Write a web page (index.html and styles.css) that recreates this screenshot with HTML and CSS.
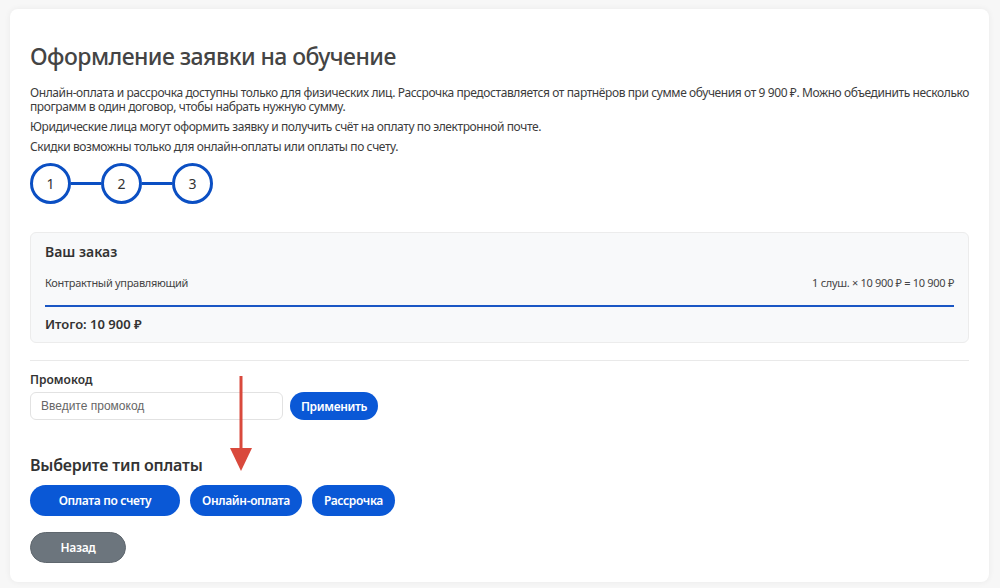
FILE: index.html
```html
<!DOCTYPE html>
<html lang="ru">
<head>
<meta charset="utf-8">
<title>Оформление заявки на обучение</title>
<link rel="stylesheet" href="styles.css">
</head>
<body>
<div class="page">
  <main class="card">
    <h1 class="title">Оформление заявки на обучение</h1>
    <p class="text">Онлайн-оплата и рассрочка доступны только для физических лиц. Рассрочка предоставляется от партнёров при сумме обучения от 9 900 ₽. Можно объединить несколько программ в один договор, чтобы набрать нужную сумму.</p>
    <p class="text">Юридические лица могут оформить заявку и получить счёт на оплату по электронной почте.</p>
    <p class="text">Скидки возможны только для онлайн-оплаты или оплаты по счету.</p>

    <div class="steps">
      <span class="step">1</span>
      <span class="step-line"></span>
      <span class="step">2</span>
      <span class="step-line"></span>
      <span class="step">3</span>
    </div>

    <section class="order">
      <h2 class="order-title">Ваш заказ</h2>
      <div class="order-row">
        <span>Контрактный управляющий</span>
        <span>1 слуш. × 10 900 ₽ = 10 900 ₽</span>
      </div>
      <div class="order-total">Итого: 10 900 ₽</div>
    </section>

    <hr class="divider">

    <div class="promo">
      <label class="promo-label" for="promo">Промокод</label>
      <div class="promo-row">
        <input id="promo" class="promo-input" type="text" placeholder="Введите промокод">
        <button class="btn btn-sm">Применить</button>
      </div>
    </div>

    <h3 class="pay-title">Выберите тип оплаты</h3>
    <div class="pay-buttons">
      <button class="btn btn-wide">Оплата по счету</button>
      <button class="btn">Онлайн-оплата</button>
      <button class="btn">Рассрочка</button>
    </div>
    <div class="back-row">
      <button class="btn btn-gray">Назад</button>
    </div>

    <svg class="arrow" width="24" height="96" viewBox="0 0 24 96" aria-hidden="true">
      <line x1="12" y1="0" x2="12" y2="76" stroke="#d9493c" stroke-width="3"/>
      <polygon points="1,72 23,72 12,95" fill="#d9493c"/>
    </svg>
  </main>
</div>
</body>
</html>
```

FILE: styles.css
```css
* { box-sizing: border-box; }
html, body { margin: 0; padding: 0; }
body {
  background: #f7f7f7;
  font-family: "Noto Sans", "Open Sans", sans-serif;
  color: #3f3f3f;
}
.page {
  padding: 9px 11px 6px 10px;
}
.card {
  position: relative;
  background: #fff;
  border-radius: 8px;
  box-shadow: 0 0 6px rgba(0,0,0,0.06);
  padding: 33px 20px 17px 20px;
  min-height: 573px;
}
.title {
  margin: 0 0 16px;
  font-size: 23px;
  font-weight: 500;
  color: #444;
  line-height: 28px;
  letter-spacing: -0.55px;
}
.text {
  margin: 0 0 6px;
  font-size: 12px;
  line-height: 14px;
  color: #3c3c3c;
  letter-spacing: -0.4px;
}
.steps {
  display: flex;
  align-items: center;
  margin-top: 9px;
}
.step {
  width: 41px;
  height: 41px;
  border: 3px solid #0b4fc3;
  border-radius: 50%;
  display: flex;
  align-items: center;
  justify-content: center;
  font-size: 14px;
  color: #333;
}
.step-line {
  width: 30px;
  height: 3px;
  background: #0b4fc3;
}
.order {
  margin-top: 28px;
  background: #f8f9fa;
  border: 1px solid #ececec;
  border-radius: 6px;
  padding: 11px 14px 10px 14px;
}
.order-title {
  margin: 0;
  font-size: 14px;
  font-weight: 600;
  color: #333;
  line-height: 16px;
}
.order-row {
  display: flex;
  justify-content: space-between;
  font-size: 11px;
  color: #444;
  margin-top: 15px;
  padding-bottom: 15px;
  border-bottom: 2px solid #1a56c4;
  letter-spacing: -0.3px;
}
.order-total {
  margin-top: 9px;
  font-size: 13px;
  font-weight: 600;
  color: #333;
  line-height: 16px;
}
.divider {
  margin: 17px 0 11px;
  border: 0;
  border-top: 1px solid #e9e9e9;
}
.promo-label {
  display: block;
  font-size: 12px;
  line-height: 16px;
  font-weight: 600;
  color: #333;
  margin-bottom: 4px;
}
.promo-row {
  display: flex;
  gap: 7px;
  align-items: center;
}
.promo-input {
  width: 253px;
  height: 28px;
  border: 1px solid #e2e2e2;
  border-radius: 6px;
  padding: 0 10px;
  font-family: "Liberation Sans", Arial, sans-serif;
  font-size: 12px;
  color: #333;
  outline: none;
}
.promo-input::placeholder { color: #666; }
.btn {
  border: 0;
  border-radius: 16px;
  background: #0a58d6;
  color: #fff;
  font-family: "Noto Sans", "Open Sans", sans-serif;
  font-size: 12px;
  font-weight: 600;
  height: 31px;
  padding: 0 12px;
  cursor: pointer;
  letter-spacing: -0.35px;
}
.btn-sm {
  height: 28px;
  width: 88px;
  padding: 0;
  border-radius: 14px;
}
.btn-wide { width: 150px; }
.btn-gray {
  background: #6c757d;
  width: 96px;
  border: 1px solid #5f676e;
}
.pay-title {
  margin: 35px 0 10px;
  font-size: 16px;
  font-weight: 600;
  color: #333;
  line-height: 20px;
  letter-spacing: -0.2px;
}
.pay-buttons {
  display: flex;
  gap: 10px;
}
.back-row {
  margin-top: 16px;
}
.arrow {
  position: absolute;
  left: 219px;
  top: 367px;
}
```
